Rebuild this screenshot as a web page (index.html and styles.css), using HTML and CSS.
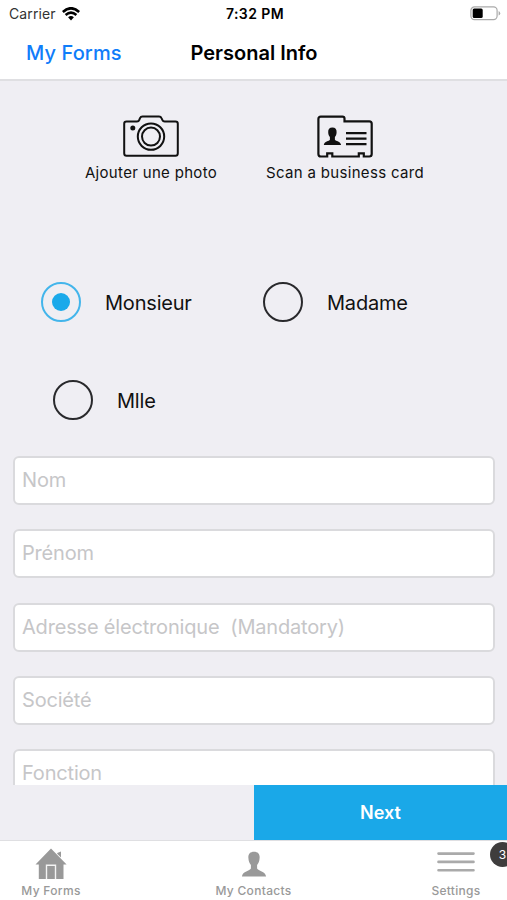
FILE: index.html
```html
<!DOCTYPE html>
<html lang="fr">
<head>
  <meta charset="utf-8" />
  <meta name="viewport" content="width=device-width, initial-scale=1.0" />
  <title>Personal Info</title>
  <link rel="stylesheet" href="styles.css">
</head>
<body>
  <div class="status-bar">
    <div class="carrier">
      <span class="carrier-name">Carrier</span>
      <svg class="wifi" viewBox="0 0 18 14" width="18" height="14">
        <path d="M.8 5Q9-2.400 17.200 5" fill="none" stroke="#000" stroke-width="2.700"/>
        <path d="M3.600 8Q9 3.200 14.400 8" fill="none" stroke="#000" stroke-width="2.500"/>
        <path d="M6.100 10.300Q9 7.900 11.900 10.300L9 13.400z" fill="#000"/>
      </svg>
    </div>
    <div class="clock">7:32 PM</div>
    <svg class="battery" viewBox="0 0 31 15" width="31" height="15">
      <rect x="0.9" y="0.9" width="26.2" height="12.8" rx="3.6" fill="#fff" stroke="#aaa" stroke-width="1.2"/>
      <rect x="2.7" y="2.6" width="10" height="9.3" rx="1.5" fill="#000"/>
      <path d="M28.6 5v4.6q1.6-.7 1.6-2.3T28.6 5z" fill="#aaa"/>
    </svg>
  </div>

  <div class="navbar">
    <a href="#" class="back">My Forms</a>
    <h1>Personal Info</h1>
  </div>

  <div class="content">
    <div class="shortcuts">
      <a href="#" class="shortcut">
        <svg viewBox="0 0 56 43" width="56" height="43" fill="none" stroke="#111" stroke-width="2">
          <path d="M3.5 6.5H14q1.7 0 2.3-1.6L17 3.2Q17.7 1.6 19.5 1.6H36q1.8 0 2.5 1.6l.8 1.7q.7 1.6 2.4 1.6H52.5q2.3 0 2.3 2.3V38.3q0 2.5-2.3 2.5H3.5q-2.3 0-2.3-2.5V8.8q0-2.3 2.3-2.3z"/>
          <circle cx="28" cy="21.6" r="13.2"/>
          <circle cx="28" cy="21.6" r="9"/>
          <circle cx="9.8" cy="13" r="2.5" fill="#111" stroke="none"/>
        </svg>
        <span>Ajouter une photo</span>
      </a>
      <a href="#" class="shortcut">
        <svg viewBox="0 0 56 43" width="56" height="43">
          <path d="M3.8 1.6H25.5q2 0 2 2v2.8H52.3q2.4 0 2.4 2.4V39q0 2.5-2.4 2.5H46.8v-3.2H41.8v3.2H15.3v-3.2H10.2v3.2H3.8q-2.4 0-2.4-2.5V4q0-2.4 2.4-2.4z" fill="none" stroke="#111" stroke-width="2.2"/>
          <path d="M15.4 12.6c3 0 4.4 1.9 4.2 4.7-.1 2.2-.6 3.5-1.7 4.7v2.8c.8 1.5 5.600 1.200 6.200 5.200H6.800c.5-4 5.400-3.700 6.100-5.200V22c-1.100-1.200-1.600-2.500-1.700-4.700-.2-2.800 1.200-4.700 4.200-4.700z" fill="#111"/>
          <path d="M29 18.2H49.5M29 23.7H49.5M29 29.2H49.5" stroke="#111" stroke-width="2.2"/>
        </svg>
        <span>Scan a business card</span>
      </a>
    </div>

    <div class="civility">
      <label class="option selected"><span class="radio"></span><span>Monsieur</span></label>
      <label class="option"><span class="radio"></span><span>Madame</span></label>
      <label class="option mlle"><span class="radio"></span><span>Mlle</span></label>
    </div>

    <form class="fields">
      <input type="text" placeholder="Nom">
      <input type="text" placeholder="Prénom">
      <input type="text" placeholder="Adresse électronique  (Mandatory)">
      <input type="text" placeholder="Société">
      <input type="text" placeholder="Fonction">
    </form>
  </div>

  <div class="actions">
    <button class="next">Next</button>
  </div>

  <div class="tabbar">
    <a href="#" class="tab">
      <svg viewBox="0 0 32 32" width="32" height="32">
        <path d="M16 .5L31.6 16.500H28.500V31H3.800V16.500H.5z" fill="#999"/>
        <path d="M22.200 5L26 3.600V9.400L22.200 5.800z" fill="#999"/>
        <path d="M11.500 31V17.300H20.500V31" fill="none" stroke="#f4f4f4" stroke-width="1.400"/>
      </svg>
      <span>My Forms</span>
    </a>
    <a href="#" class="tab">
      <svg viewBox="0 0 32 32" width="32" height="32">
        <path d="M16 3.700c4.200 0 6 2.600 5.600 6.400-.2 3.200-1 5.200-2.500 6.900v3.600c1 2.600 8.300 2.600 9 7.900H3.900c.7-5.300 8-5.300 9-7.900V17c-1.500-1.700-2.300-3.700-2.500-6.900C10 6.300 11.800 3.700 16 3.700z" fill="#999"/>
      </svg>
      <span>My Contacts</span>
    </a>
    <a href="#" class="tab">
      <svg viewBox="0 0 38 32" width="38" height="32">
        <path d="M1.500 5.600H36.500M1.500 13.900H36.500M1.500 22.300H36.500" stroke="#aaa" stroke-width="2.600" stroke-linecap="round"/>
      </svg>
      <span>Settings</span>
    </a>
    <div class="badge">3</div>
  </div>
</body>
</html>
```
FILE: styles.css
```css
* {
  box-sizing: border-box;
}

body {
  margin: 0;
  height: 900px;
  display: flex;
  flex-direction: column;
  overflow: hidden;
  background: #efeef3;
  font-family: Inter, 'Liberation Sans', sans-serif;
  color: #111;
}

a {
  text-decoration: none;
  color: inherit;
}

svg {
  display: block;
}

.status-bar {
  height: 27px;
  padding: 0 6px 0 9px;
  display: grid;
  grid-template-columns: 1fr auto 1fr;
  align-items: center;
  background: #fff;
  font-size: 14px;
}

.carrier {
  display: flex;
  align-items: center;
  gap: 6px;
  color: #333;
}

.carrier-name {
  letter-spacing: 0.1px;
}

.clock {
  font-weight: 600;
  letter-spacing: 0.4px;
  color: #000;
}

.battery {
  justify-self: end;
}

.navbar {
  height: 54px;
  padding: 0 26px;
  display: grid;
  grid-template-columns: 1fr auto 1fr;
  align-items: center;
  background: #fff;
  border-bottom: 2px solid #dfdfe2;
  font-size: 20px;
}

.back {
  color: #107dfa;
  font-weight: 500;
  letter-spacing: 0.1px;
}

.navbar h1 {
  margin: 0;
  padding: 0 0 1px 1px;
  font-size: 20px;
  font-weight: 600;
  color: #000;
}

.content {
  flex: 1;
  min-height: 0;
  overflow: hidden;
}

.shortcuts {
  height: 169px;
  padding: 34px 65px 0 54px;
  display: grid;
  grid-template-columns: 1fr 1fr;
}

.shortcut {
  display: flex;
  flex-direction: column;
  align-items: center;
  gap: 5px;
  font-size: 15px;
  letter-spacing: 0.32px;
  line-height: 20px;
  white-space: nowrap;
}

.civility {
  height: 206px;
  padding: 32px 0 0 41px;
  display: grid;
  grid-template-columns: 222px 1fr;
  grid-auto-rows: 40px;
  row-gap: 58px;
}

.option {
  display: flex;
  align-items: center;
  gap: 24px;
  font-size: 20px;
  letter-spacing: -0.2px;
  line-height: 24px;
}

.option span:last-child {
  padding-top: 2px;
}

.mlle {
  padding-left: 12px;
}

.radio {
  width: 40px;
  height: 40px;
  border: 2px solid #29292c;
  border-radius: 50%;
}

.selected .radio {
  display: flex;
  align-items: center;
  justify-content: center;
  border-color: #43b5eb;
}

.selected .radio::after {
  content: "";
  width: 18px;
  height: 18px;
  border-radius: 50%;
  background: #1aa9ea;
}

.fields {
  padding: 0 12px 0 13px;
  display: flex;
  flex-direction: column;
  gap: 24.3px;
}

.fields input {
  height: 49px;
  padding: 0 7px 1px;
  border: 2px solid #dadadd;
  border-radius: 6px;
  background: #fff;
  font-family: inherit;
  font-size: 20px;
  letter-spacing: -0.18px;
}

.fields input::placeholder {
  color: #c6c6c8;
}

.actions {
  height: 55px;
  display: flex;
  justify-content: flex-end;
}

.next {
  width: 253px;
  border: 0;
  background: #1aa8e8;
  color: #fff;
  font-family: inherit;
  font-size: 18px;
  font-weight: 600;
}

.tabbar {
  position: relative;
  height: 60px;
  padding-top: 7px;
  display: flex;
  justify-content: space-between;
  background: #fff;
  border-top: 1px solid #dfdfe2;
}

.tab {
  width: 102px;
  display: flex;
  flex-direction: column;
  align-items: center;
  gap: 3px;
  color: #999;
  font-size: 12px;
  font-weight: 500;
  letter-spacing: 0.3px;
  line-height: 15px;
}

.badge {
  position: absolute;
  top: 1px;
  right: -8px;
  width: 25px;
  height: 25px;
  border-radius: 50%;
  background: #3f3d3d;
  color: #fff;
  font-size: 12px;
  line-height: 25px;
  text-align: center;
}
```
